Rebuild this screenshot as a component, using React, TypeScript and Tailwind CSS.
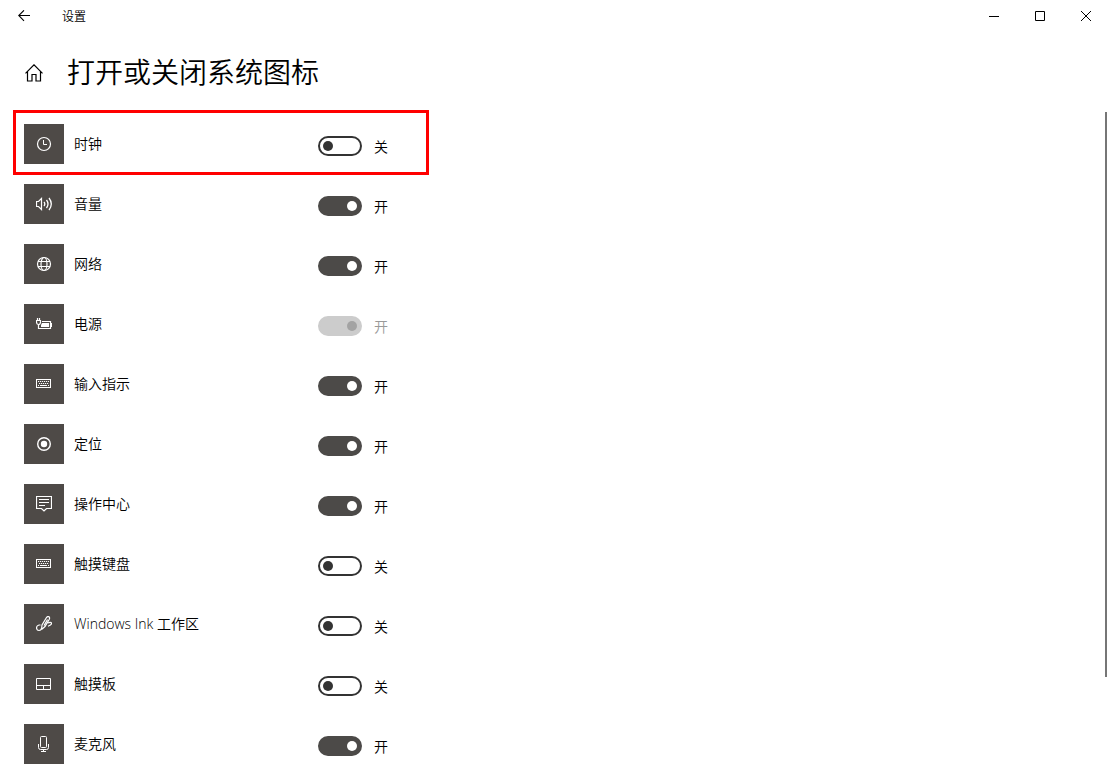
import React, { useState } from 'react';

interface SystemIcon {
  id: string;
  label: string;
  on: boolean;
  disabled?: boolean;
  highlighted?: boolean;
  glyph: React.ReactNode;
}

const keyboardGlyph = (
  <>
    <rect x="0.5" y="3.5" width="14" height="8" />
    <path d="M2 5.5h11M3 7.5h10" strokeWidth="1.2" strokeDasharray="1.2 0.8" />
    <path d="M2 9.5h1M4 9.5h7M12 9.5h1" />
  </>
);

const initialIcons: SystemIcon[] = [
  {
    id: 'clock',
    label: '时钟',
    on: false,
    highlighted: true,
    glyph: (
      <>
        <circle cx="8" cy="8" r="6.5" strokeWidth="1.2" />
        <path d="M7.5 4v4.5H11" />
      </>
    )
  },
  {
    id: 'volume',
    label: '音量',
    on: true,
    glyph: (
      <>
        <path d="M0.5 5.5h2l3-3v11l-3-3h-2z" strokeWidth="1.2" />
        <path d="M8 6q1.600 2 0 4M10.500 4q3 4 0 8M13 2q4.600 6 0 12" strokeWidth="1.3" />
      </>
    )
  },
  {
    id: 'network',
    label: '网络',
    on: true,
    glyph: (
      <g strokeWidth="1.2">
        <circle cx="8" cy="8" r="6.5" />
        <ellipse cx="8" cy="8" rx="3" ry="6.5" />
        <path d="M2 5.5h12M2 10.5h12" />
      </g>
    )
  },
  {
    id: 'power',
    label: '电源',
    on: true,
    disabled: true,
    glyph: (
      <>
        <path d="M1.500 2v2.500M3.500 2v2.500M0 4.500h5M0.500 4.500v1.500q0 2.500 2 2.500t2-2.500v-1.500M2.500 8.500v4h12v-7h-8.500M15.500 7v4" strokeWidth="1.2" />
        <path d="M6 7h7v4H5V9z" fill="currentColor" stroke="none" />
      </>
    )
  },
  { id: 'input', label: '输入指示', on: true, glyph: keyboardGlyph },
  {
    id: 'location',
    label: '定位',
    on: true,
    glyph: (
      <>
        <circle cx="8" cy="8" r="6.3" strokeWidth="1.4" />
        <circle cx="8" cy="8" r="3.2" fill="currentColor" stroke="none" />
      </>
    )
  },
  {
    id: 'action-center',
    label: '操作中心',
    on: true,
    glyph: (
      <>
        <path d="M0.500 0.500h15v12h-5L8 15l-2.500-2.500h-5z" strokeWidth="1.2" />
        <path d="M3 3.500h10M3 6.500h10M3 9.500h6" />
      </>
    )
  },
  { id: 'touch-keyboard', label: '触摸键盘', on: false, glyph: keyboardGlyph },
  {
    id: 'ink',
    label: 'Windows Ink 工作区',
    on: false,
    glyph: (
      <g strokeWidth="1.2">
        <path d="M4.500 9H3Q0.500 9.500 0.500 12Q0.800 14.500 3 14.500Q5 14.500 5.500 12.500" />
        <path d="M5.500 13.500l0.500-4.500 4.500-7.500q1-1.500 2.500-0.700q1 0.900 0.300 2.400l-4.300 7.300-3.500 3M8 9.500l3.500-6" />
        <path d="M11.500 7q3.500-1.500 4 0.200t-3.500 3" />
      </g>
    )
  },
  {
    id: 'touchpad',
    label: '触摸板',
    on: false,
    glyph: <path d="M0.500 2.500h14v11h-14zM0.500 9.500h14M7.500 9.500v4" />
  },
  {
    id: 'microphone',
    label: '麦克风',
    on: true,
    glyph: (
      <>
        <rect x="4.5" y="0.5" width="6" height="11" rx="1" />
        <path d="M2.500 8v3.500q0 2 2 2h6q2 0 2-2V8M7.500 13.500v2M5 15.500h5" />
      </>
    )
  }
];

const TitleBar: React.FC = () => (
  <header className="flex h-8 shrink-0 items-center justify-between">
    <div className="flex items-center">
      <button type="button" aria-label="后退" className="flex h-8 w-12 items-center justify-center">
        <svg width="12" height="12" viewBox="0 0 12 12" fill="none" stroke="currentColor" strokeWidth="1.1">
          <path d="M12 5.500H0.700M6 0.300L0.700 5.500 6 10.800" />
        </svg>
      </button>
      <span className="ml-3.5 pt-0.5 text-xs">设置</span>
    </div>
    <div className="flex">
      <button type="button" aria-label="最小化" className="flex h-8 w-[46px] items-center justify-center hover:bg-black/10">
        <svg width="10" height="10" viewBox="0 0 10 10" stroke="currentColor">
          <path d="M0 5.500h10" />
        </svg>
      </button>
      <button type="button" aria-label="最大化" className="flex h-8 w-[46px] items-center justify-center hover:bg-black/10">
        <svg width="10" height="10" viewBox="0 0 10 10" fill="none" stroke="currentColor">
          <path d="M0.500 0.500h9v9h-9z" />
        </svg>
      </button>
      <button type="button" aria-label="关闭" className="flex h-8 w-[46px] items-center justify-center hover:bg-red-600 hover:text-white">
        <svg width="10" height="10" viewBox="0 0 10 10" stroke="currentColor">
          <path d="M0 0l10 10M10 0L0 10" />
        </svg>
      </button>
    </div>
  </header>
);

interface IconRowProps {
  item: SystemIcon;
  onToggle: (id: string) => void;
}

const IconRow: React.FC<IconRowProps> = ({ item, onToggle }) => (
  <li className="relative flex h-[60px] w-[405px] items-center">
    {item.highlighted && (
      <div className="pointer-events-none absolute -top-1 -left-[11px] h-[65px] w-[416px] border-3 border-[#ff0000]" />
    )}
    <div className="flex h-10 w-10 items-center justify-center bg-[#4e4a47] text-white">
      <svg width="16" height="16" viewBox="0 0 16 16" fill="none" stroke="currentColor">
        {item.glyph}
      </svg>
    </div>
    <label htmlFor={item.id} className="ml-2.5 w-[244px]">
      {item.label}
    </label>
    <div className="flex items-center gap-3 pt-1">
      <input
        id={item.id}
        type="checkbox"
        role="switch"
        checked={item.on}
        disabled={item.disabled}
        onChange={() => onToggle(item.id)}
        className="flex h-5 w-11 appearance-none items-center rounded-full border-2 border-[#333333] px-[3px] before:h-2.5 before:w-2.5 before:rounded-full before:bg-[#333333] checked:justify-end checked:border-[#4c4a48] checked:bg-[#4c4a48] checked:before:bg-white disabled:border-[#cccccc] disabled:bg-[#cccccc] disabled:before:bg-[#a3a3a3]"
      />
      <span className={item.disabled ? 'pt-0.5 text-[#999999]' : 'pt-0.5'}>{item.on ? '开' : '关'}</span>
    </div>
  </li>
);

const App: React.FC = () => {
  const [icons, setIcons] = useState<SystemIcon[]>(initialIcons);

  const handleToggle = (id: string) => {
    setIcons(prev => prev.map(item => (item.id === id ? { ...item, on: !item.on } : item)));
  };

  return (
    <div className="flex h-screen flex-col overflow-hidden bg-white font-['Open_Sans','Noto_Sans_CJK_SC',sans-serif] text-sm font-[350] text-black">
      <TitleBar />

      <div className="flex h-20 shrink-0 items-center gap-6 pl-[25px]">
        <a href="#home" aria-label="主页" className="pt-0.5">
          <svg width="18" height="18" viewBox="0 0 18 18" fill="none" stroke="currentColor" strokeWidth="1.2">
            <path d="M0.500 9.300L9 0.800l8.500 8.500M2.500 7.500v9.500h4.500v-6.500h4v6.500h4.500V7.500" />
          </svg>
        </a>
        <h1 className="text-[28px] leading-9 font-[350]">打开或关闭系统图标</h1>
      </div>

      <main className="flex min-h-0 flex-1 justify-between">
        <ul className="pt-0.5 pl-6">
          {icons.map(item => (
            <IconRow key={item.id} item={item} onToggle={handleToggle} />
          ))}
        </ul>
        {/* Полоса прокрутки */}
        <div className="mr-0.5 h-[86%] w-0.5 bg-[#767676]" />
      </main>
    </div>
  );
};

export default App;
